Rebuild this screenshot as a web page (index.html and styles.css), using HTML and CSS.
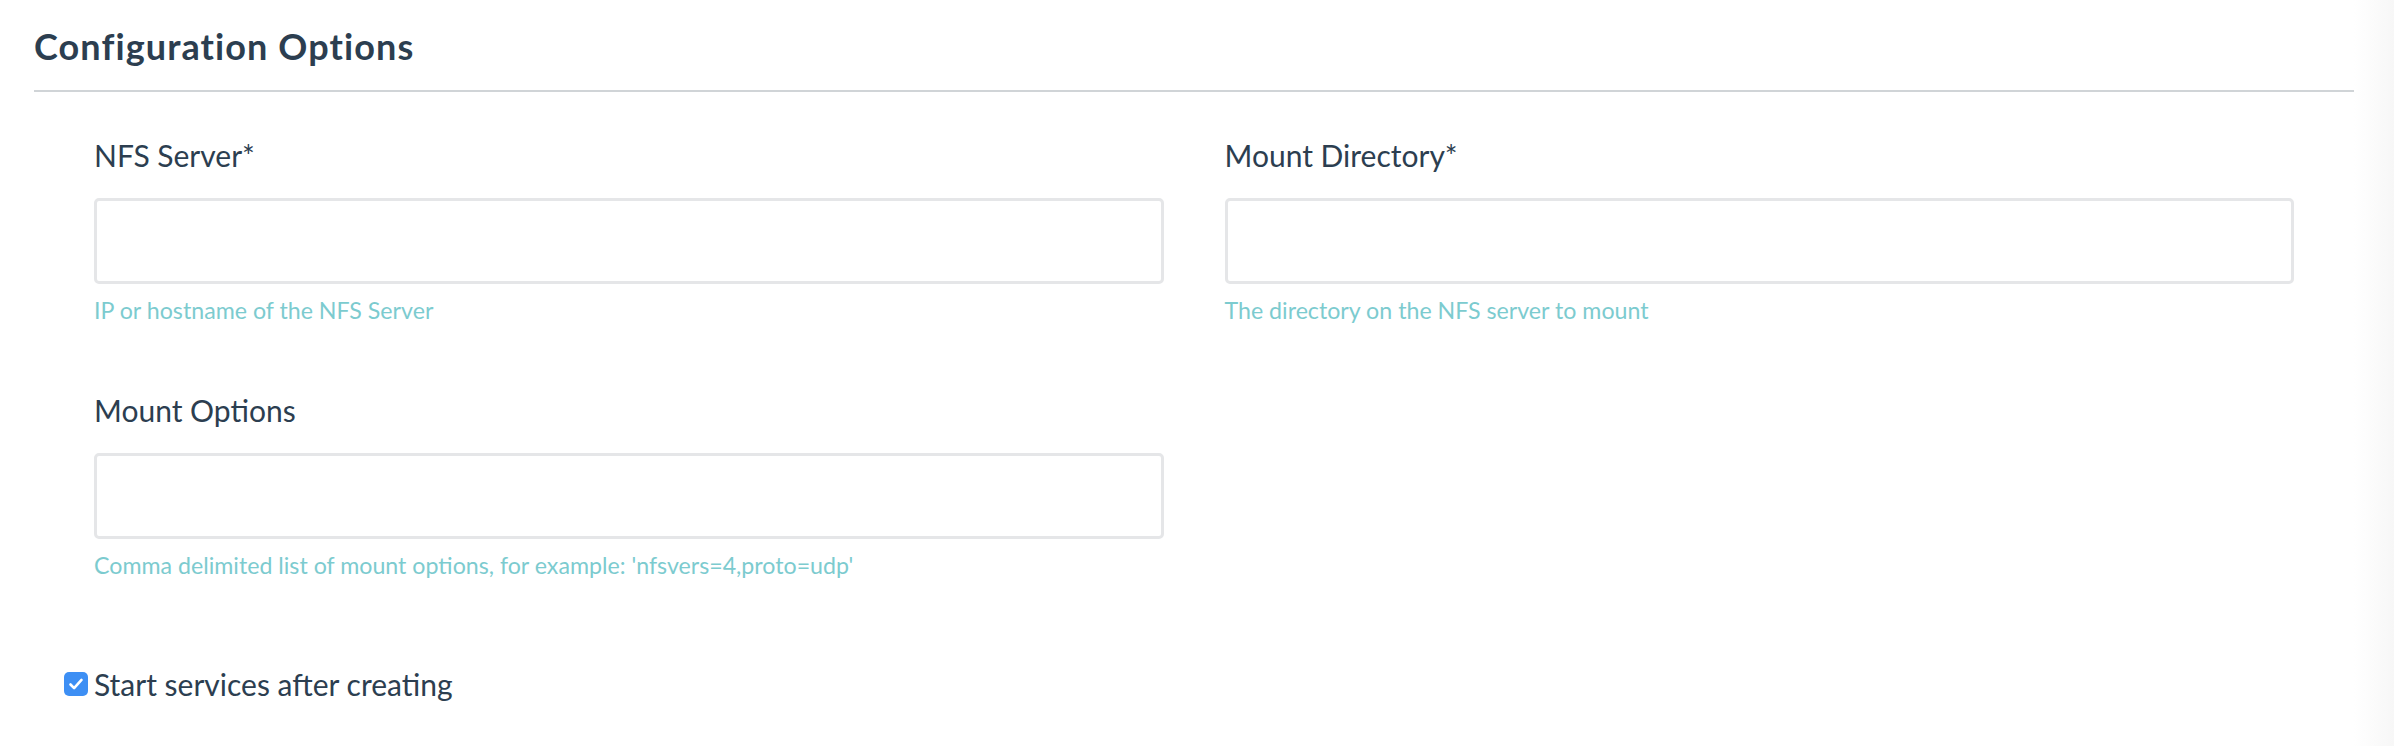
FILE: index.html
```html
<!DOCTYPE html>
<html lang="en">
<head>
<meta charset="utf-8">
<title>Configuration Options</title>
<link rel="stylesheet" href="styles.css">
</head>
<body>
<div class="page">
  <main class="main">
    <h2 class="section-title">Configuration Options</h2>
    <div class="form-grid">
      <div class="field">
        <label class="field-label" for="nfs-server">NFS Server*</label>
        <input class="field-input" id="nfs-server" type="text">
        <p class="field-help">IP or hostname of the NFS Server</p>
      </div>
      <div class="field">
        <label class="field-label" for="mount-dir">Mount Directory*</label>
        <input class="field-input" id="mount-dir" type="text">
        <p class="field-help">The directory on the NFS server to mount</p>
      </div>
      <div class="field">
        <label class="field-label" for="mount-opts">Mount Options</label>
        <input class="field-input" id="mount-opts" type="text">
        <p class="field-help">Comma delimited list of mount options, for example: 'nfsvers=4,proto=udp'</p>
      </div>
    </div>
    <label class="check-row">
      <span class="check-box">
        <svg viewBox="0 0 24 24" width="24" height="24" aria-hidden="true"><path d="M6.5 12.5l3.6 3.6 7.4-8.2" fill="none" stroke="#fff" stroke-width="2.6" stroke-linecap="round" stroke-linejoin="round"/></svg>
      </span>
      <span class="check-text">Start services after creating</span>
    </label>
  </main>
  <div class="gutter"></div>
</div>
</body>
</html>
```
FILE: styles.css
```css
html, body {
  margin: 0;
  padding: 0;
  background: #ffffff;
}

body {
  font-family: Lato, "Open Sans", "Liberation Sans", sans-serif;
  color: #2c3e50;
}

.page {
  display: flex;
  width: 2394px;
  min-height: 746px;
}

.main {
  flex: 1;
  padding-left: 34px;
  padding-top: 26px;
}

.gutter {
  width: 40px;
  background: linear-gradient(to right, #ffffff, #f7f7f7);
}

.section-title {
  margin: 0;
  font-size: 36px;
  line-height: 40px;
  font-weight: 700;
  letter-spacing: 1.1px;
  color: #2c3e50;
  padding-bottom: 24px;
  border-bottom: 2px solid #d0d4d7;
}

.form-grid {
  display: grid;
  grid-template-columns: 1fr 1fr;
  column-gap: 61px;
  row-gap: 65px;
  padding: 43px 60px 0 60px;
}

.field {
  display: flex;
  flex-direction: column;
}

.field-label {
  font-size: 30px;
  line-height: 40px;
  color: #2c3e50;
  margin-bottom: 23px;
}

.field-input {
  box-sizing: border-box;
  height: 86px;
  width: 100%;
  border: 3px solid #e5e6e8;
  border-radius: 5px;
  background: #ffffff;
  margin: 0;
  outline: none;
}

.field-help {
  margin: 11px 0 0 0;
  font-size: 23.2px;
  line-height: 30px;
  color: #7ccbcf;
}

.check-row {
  display: flex;
  align-items: center;
  gap: 6px;
  margin-top: 84px;
  margin-left: 30px;
}

.check-box {
  width: 24px;
  height: 24px;
  border-radius: 5px;
  background: #3d8ff4;
  display: flex;
  align-items: center;
  justify-content: center;
}

.check-box svg {
  display: block;
}

.check-text {
  font-size: 30px;
  line-height: 40px;
  color: #2c3e50;
}
```
